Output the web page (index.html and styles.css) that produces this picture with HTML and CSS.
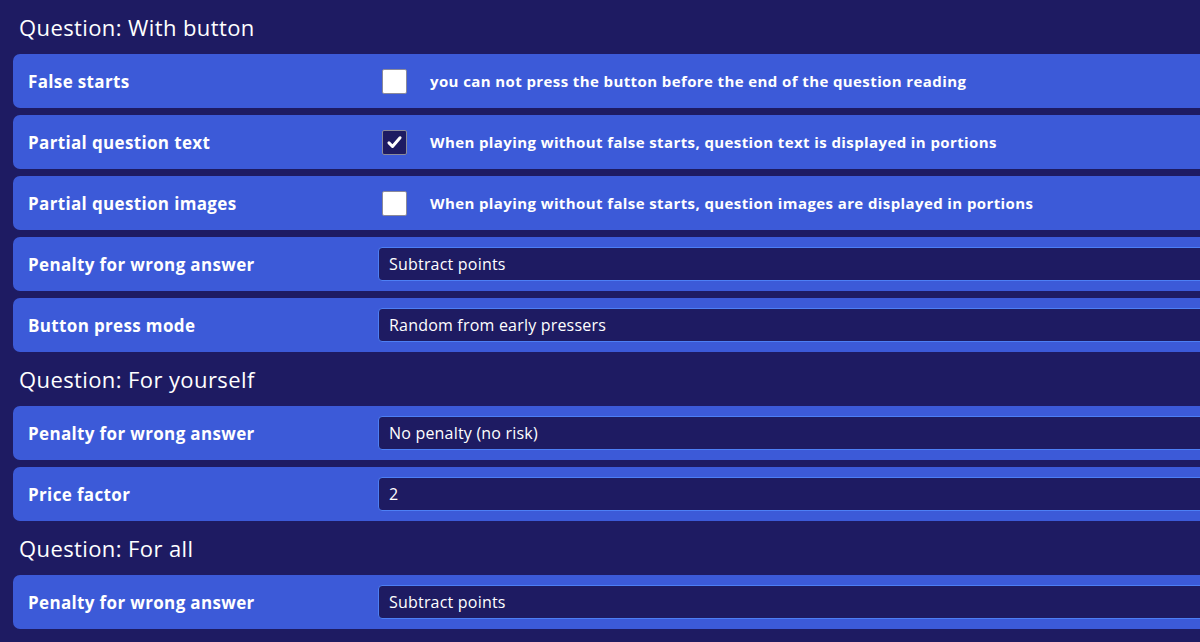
FILE: index.html
```html
<!DOCTYPE html>
<html lang="en">
<head>
  <meta charset="UTF-8">
  <title>Game settings</title>
  <link rel="stylesheet" href="styles.css">
</head>
<body>
  <div class="settings">
    <h3 class="group-title">Question: With button</h3>

    <div class="row">
      <span class="label">False starts</span>
      <div class="control">
        <span class="check"></span>
        <span class="hint">you can not press the button before the end of the question reading</span>
      </div>
    </div>

    <div class="row">
      <span class="label">Partial question text</span>
      <div class="control">
        <span class="check checked">
          <svg viewBox="0 0 24 24" width="19" height="19"><path d="M5 12.5l4.5 4.5L19 6" fill="none" stroke="#fff" stroke-width="3.8" stroke-linecap="round" stroke-linejoin="round"/></svg>
        </span>
        <span class="hint">When playing without false starts, question text is displayed in portions</span>
      </div>
    </div>

    <div class="row">
      <span class="label">Partial question images</span>
      <div class="control">
        <span class="check"></span>
        <span class="hint">When playing without false starts, question images are displayed in portions</span>
      </div>
    </div>

    <div class="row">
      <span class="label">Penalty for wrong answer</span>
      <div class="control">
        <div class="select">Subtract points</div>
      </div>
    </div>

    <div class="row">
      <span class="label">Button press mode</span>
      <div class="control">
        <div class="select">Random from early pressers</div>
      </div>
    </div>

    <h3 class="group-title">Question: For yourself</h3>

    <div class="row">
      <span class="label">Penalty for wrong answer</span>
      <div class="control">
        <div class="select">No penalty (no risk)</div>
      </div>
    </div>

    <div class="row">
      <span class="label">Price factor</span>
      <div class="control">
        <div class="select">2</div>
      </div>
    </div>

    <h3 class="group-title">Question: For all</h3>

    <div class="row">
      <span class="label">Penalty for wrong answer</span>
      <div class="control">
        <div class="select">Subtract points</div>
      </div>
    </div>
  </div>
</body>
</html>
```

FILE: styles.css
```css
body {
  margin: 0;
  background: #1e1b62;
  color: #fff;
  font-family: "Open Sans", "Noto Sans", sans-serif;
  overflow: hidden;
}
.settings {
  display: flex;
  flex-direction: column;
  gap: 7px;
  padding: 7px 0 0 13px;
  width: 1240px;
}
.group-title {
  margin: 0;
  padding-left: 6px;
  height: 40px;
  line-height: 40px;
  font-size: 22px;
  font-weight: normal;
  letter-spacing: 0.4px;
}
.row {
  display: grid;
  grid-template-columns: 365px 1fr;
  align-items: center;
  height: 54px;
  background: #3c5ad8;
  border-radius: 7px;
}
.label {
  padding-left: 15px;
  font-size: 17px;
  font-weight: bold;
  letter-spacing: 0.35px;
}
.control {
  display: flex;
  align-items: center;
}
.check {
  box-sizing: border-box;
  width: 25px;
  height: 25px;
  margin-left: 4px;
  background: #fff;
  border: 1px solid #8a8a9a;
  border-radius: 2px;
  display: flex;
  align-items: center;
  justify-content: center;
}
.check.checked {
  background: #1e1b62;
}
.hint {
  margin-left: 23px;
  font-size: 15px;
  font-weight: bold;
  letter-spacing: 0.4px;
}
.select {
  box-sizing: border-box;
  width: 100%;
  height: 34px;
  line-height: 32px;
  padding-left: 10px;
  background: #1e1b62;
  border: 1px solid #4d7ff5;
  border-radius: 4px;
  font-size: 16px;
  letter-spacing: 0.2px;
}
```
